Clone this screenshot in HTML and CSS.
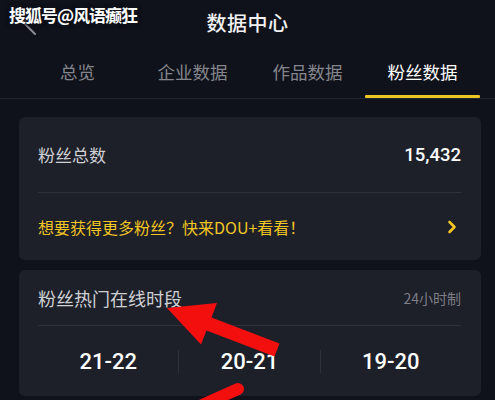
FILE: index.html
```html
<!DOCTYPE html>
<html lang="zh-CN">
<head>
    <meta charset="UTF-8">
    <meta name="viewport" content="width=device-width, initial-scale=1.0">
    <title>数据中心</title>
    <link rel="stylesheet" href="styles.css">
</head>
<body>
    <header class="topbar">
        <svg class="back" width="20" height="26" viewBox="0 0 20 26"><path d="M14 2 L4 13 L15 24" fill="none" stroke="#8c8d94" stroke-width="2" stroke-linecap="round" stroke-linejoin="round"/></svg>
        <h1>数据中心</h1>
    </header>
    <nav class="tabs">
        <div class="tab">总览</div>
        <div class="tab">企业数据</div>
        <div class="tab">作品数据</div>
        <div class="tab active">粉丝数据</div>
    </nav>

    <section class="card">
        <div class="row total">
            <span class="label">粉丝总数</span>
            <span class="value">15,432</span>
        </div>
        <div class="row promo">
            <span>想要获得更多粉丝？快来DOU+看看！</span>
            <svg width="10" height="14" viewBox="0 0 10 14"><path d="M2.5 2 L7.5 7 L2.5 12" fill="none" stroke="#f2c624" stroke-width="2.6" stroke-linecap="round" stroke-linejoin="round"/></svg>
        </div>
    </section>

    <section class="card">
        <div class="row head">
            <span class="label big">粉丝热门在线时段</span>
            <span class="hint">24小时制</span>
        </div>
        <div class="times">
            <div class="slot">21-22</div>
            <div class="slot">20-21</div>
            <div class="slot">19-20</div>
        </div>
    </section>

    <div class="watermark">搜狐号@风语癫狂</div>

    <!-- annotation arrows drawn over the screenshot -->
    <svg class="marks" width="495" height="400" viewBox="0 0 495 400">
        <polygon fill="#f40f0f" points="167,308 217,303 211.5,317.5 279.5,343.5 274.5,356.5 206.5,330.5 201,344.5"/>
        <line x1="238" y1="389" x2="200" y2="406" stroke="#f40f0f" stroke-width="12" stroke-linecap="round"/>
    </svg>
</body>
</html>
```

FILE: styles.css
```css
body { margin: 0; width: 495px; height: 400px; overflow: hidden; position: relative; background: #10121b; color: #fff; font-family: "Noto Sans CJK SC", "Noto Sans", sans-serif; }
.topbar { height: 45px; display: flex; align-items: center; justify-content: center; position: relative; }
.topbar h1 { margin: 0; font-size: 20px; font-weight: 500; color: #f2f2f4; letter-spacing: 0.5px; }
.back { position: absolute; left: 20px; top: 10px; }
.tabs { display: flex; height: 53px; padding: 0 15px 0 20px; border-bottom: 1px solid #20222c; }
.tab { flex: 1; display: flex; align-items: center; justify-content: center; font-size: 17.5px; color: #85868d; position: relative; }
.tab.active { color: #fff; }
.tab.active::after { content: ""; position: absolute; left: 0; right: 0; bottom: 0; height: 3px; background: #e9c625; border-radius: 1px; }
.card { margin: 18px 14px 0 19px; padding: 0 20px 0 19px; background: #1d1f29; border-radius: 6px; }
.card + .card { margin-top: 10px; }
.row { display: flex; align-items: center; justify-content: space-between; }
.row.total { height: 75px; border-bottom: 1px solid #2e303a; }
.row.promo { height: 67px; color: #f2c624; font-size: 16px; }
.row.promo svg { margin-right: 4px; }
.row.head { height: 55px; border-bottom: 1px solid #2e303a; }
.label { font-size: 17px; color: #cfd0d4; }
.label.big { font-size: 18px; }
.value { font-family: Roboto, "Liberation Sans", sans-serif; font-size: 18.5px; font-weight: 500; color: #fff; }
.hint { font-size: 14px; color: #7d7e86; }
.times { display: flex; height: 70px; align-items: center; }
.slot { flex: 1; height: 23px; display: flex; align-items: center; justify-content: center; font-family: Roboto, "Liberation Sans", sans-serif; font-size: 22px; font-weight: 500; color: #fff; }
.slot + .slot { border-left: 1px solid #2e303a; }
.watermark { position: absolute; left: 9px; top: 2px; font-size: 17px; font-weight: 700; letter-spacing: -1px; color: #fff; text-shadow: 0 0 4px #10121b, 0 0 4px #10121b, 0 0 3px #10121b; }
.marks { position: absolute; left: 0; top: 0; }
```
